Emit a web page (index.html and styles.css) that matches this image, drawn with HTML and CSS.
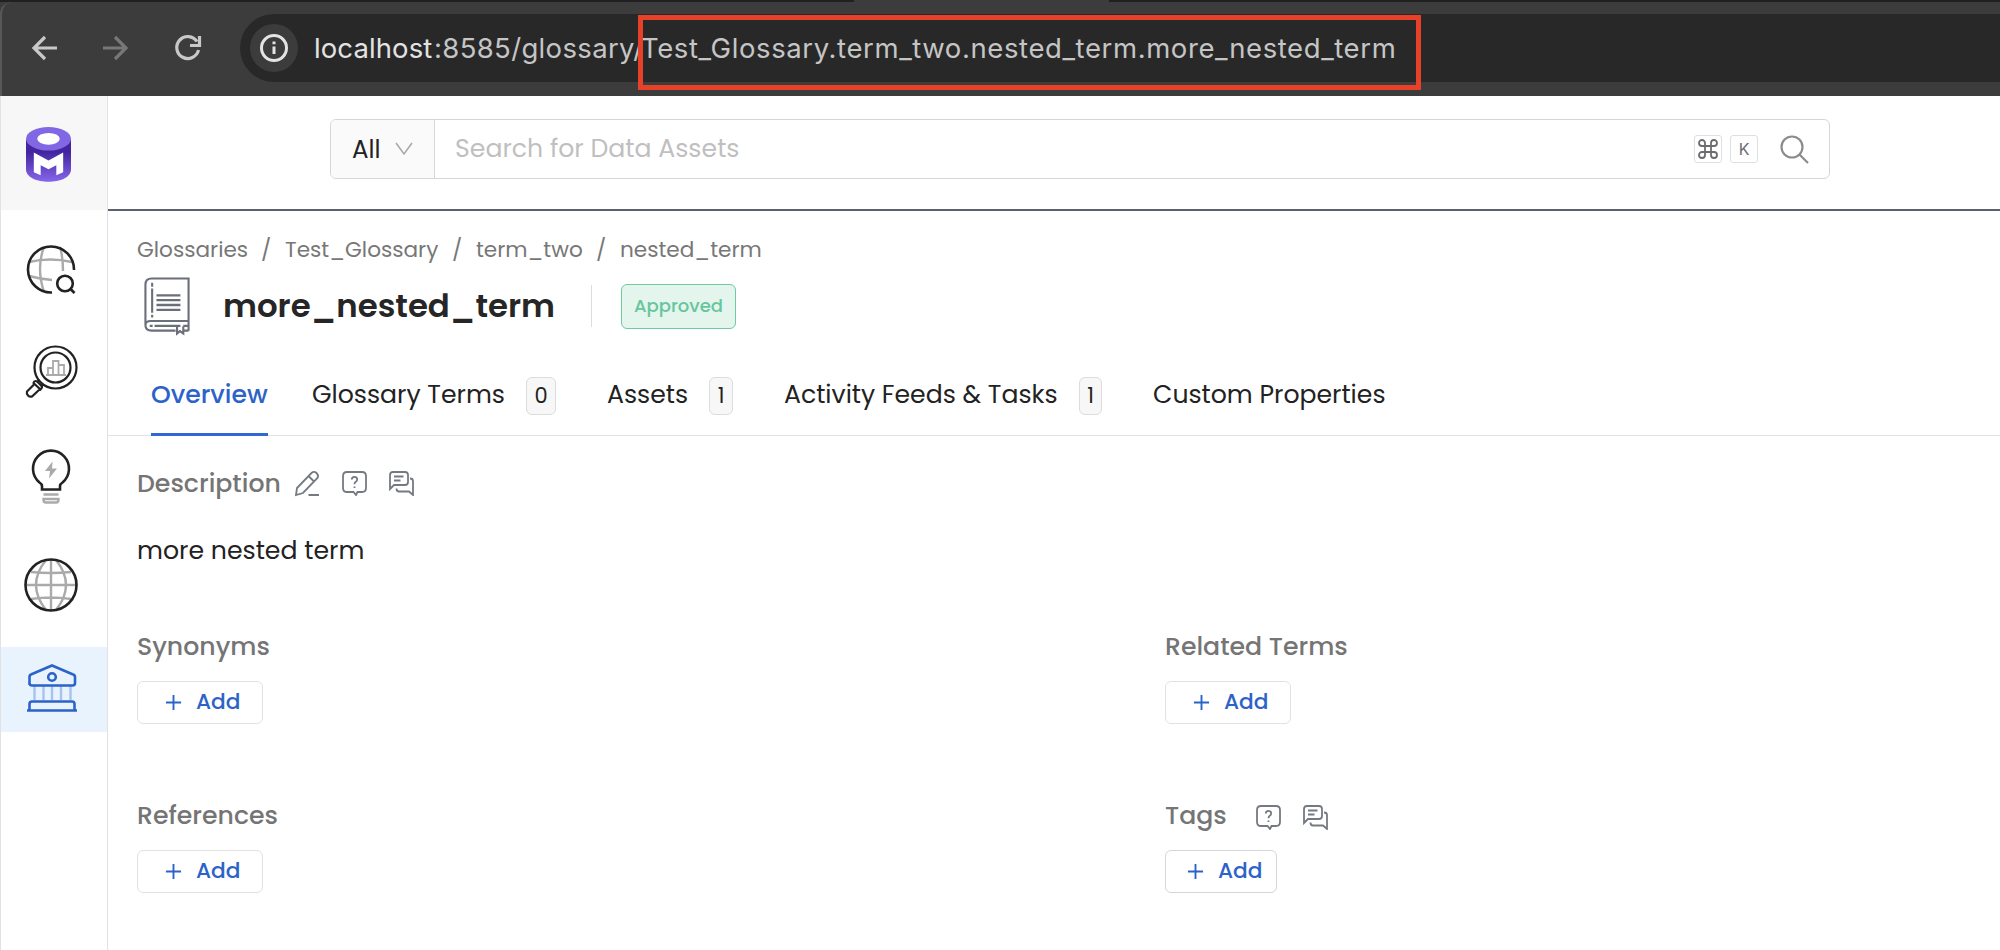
FILE: index.html
```html
<!DOCTYPE html>
<html lang="en">
<head>
<meta charset="utf-8">
<title>more_nested_term</title>
<link rel="stylesheet" href="styles.css">
</head>
<body>
<svg class="defs" width="0" height="0">
  <symbol id="help" viewBox="0 0 25 25"><path d="M5 1H20Q24 1 24 5V17Q24 21 20 21H15.500L14 24L11.500 21H5Q1 21 1 17V5Q1 1 5 1ZM9.800 8.500Q9.800 5.800 12.500 5.800T15.200 8.500Q15.200 10 13.500 11Q12.500 11.700 12.500 13.200M12.500 15.500V17"/></symbol>
  <symbol id="chat" viewBox="0 0 25 25"><path d="M4 1H16Q19 1 19 4V11Q19 14 16 14H5L1 18V4Q1 1 4 1ZM5 5.500H14.500M5 9.500H11.500M21 7.500Q24 7.500 24 10V24L20 20.500H10Q7.500 20.500 7.500 17.500"/></symbol>
  <symbol id="plus" viewBox="0 0 18 18"><path d="M9 1V17M1 9H17"/></symbol>
</svg>
<header class="browser">
  <div class="tabstrip"><i class="tab-left"></i><i class="tab-right"></i></div>
  <div class="toolbar">
    <svg class="tool back" viewBox="0 0 26 26"><path d="M25 13H2M13 2L2 13L13 24"/></svg>
    <svg class="tool forward" viewBox="0 0 26 26"><path d="M1 13H24M13 2L24 13L13 24"/></svg>
    <svg class="tool reload" viewBox="0 0 26 26"><path d="M22 6.500A11 11 0 1 0 23.500 15M24.500 1V10.500H15"/></svg>
    <div class="omnibox">
      <span class="info"><svg viewBox="0 0 30 30"><circle cx="15" cy="15" r="12.500"/><path d="M15 13.500V21M15 8.500V11.200"/></svg></span>
      <span class="url"><b class="host">localhost</b><span class="port">:8585/glossary/</span><span class="path">Test_Glossary.term_two.nested_term.more_nested_term</span></span>
    </div>
  </div>
  <div class="highlight"></div>
</header>
<div class="app">
  <aside class="sidebar">
    <div class="brand">
      <svg width="45" height="55" viewBox="0 0 46 56" preserveAspectRatio="none">
        <defs><linearGradient id="lg" x2="0" y2="1"><stop offset=".3" stop-color="#43269f"/><stop offset="1" stop-color="#8666eb"/></linearGradient></defs>
        <path d="M0 13V43C0 60 46 60 46 43V13Z" fill="url(#lg)"/>
        <ellipse cx="23" cy="12" rx="23" ry="12" fill="#8267e4"/><ellipse cx="23" cy="12" rx="11.500" ry="6" fill="#fff"/>
        <path d="M8 26L23 34L38 26V46L31 49V39L23 43L15 39V49L8 46Z" fill="#fff"/>
      </svg>
    </div>
    <nav class="menu">
      <a class="item explore"><svg width="50" height="50" viewBox="0 0 50 50"><g class="soft"><path d="M18 2Q10 23 18 47M34 2Q37 12 37 26M3 17Q24 12 46 17M3 31Q14 34 26 35"/></g><path d="M26 47.500A23 23 0 1 1 48 25"/><circle cx="39" cy="38.500" r="7.800"/><path d="M44.500 44L48.500 48"/></svg></a>
      <a class="item quality"><svg width="54" height="54" viewBox="0 0 54 54"><circle cx="31.500" cy="22.500" r="21"/><circle cx="31.500" cy="22.500" r="15"/><g class="soft thin"><path d="M22 30H42M24 30V23H29V30M29 30V16H34.500V30M34.500 20H40V30"/></g><path d="M15.500 34.500L13 37.500M19.500 39L17 41.500M11.500 36Q13 36 18 41.500Q18.500 43 16.500 44.500L9.500 38Q10 36 11.500 36ZM10 39.500L3 46.500A4 4 0 0 0 8 51.500L15.500 44.500"/></svg></a>
      <a class="item insight"><svg width="40" height="56" viewBox="0 0 40 56"><path d="M11 40.500V37Q11 35 8.500 33.500A18 18 0 1 1 31.500 33.500Q29 35 29 37V40.500Z"/><g class="soft"><path d="M12.500 45.500H27.500M12.500 50H27.500V51Q27.500 53.500 25 53.500H15Q12.500 53.500 12.500 51Z"/></g><path class="bolt" d="M21.500 12.500L14 22H19L18 29.500L26 19.500H21Z"/></svg></a>
      <a class="item domain"><svg width="54" height="54" viewBox="0 0 54 54"><g class="soft"><path d="M27 1V53M1 27H53M7 14Q27 16 47 14M7 41Q27 38 47 41"/><path d="M22 2Q2 27 22 52M32 2Q52 27 32 52"/></g><circle cx="27" cy="27" r="25.500"/></svg></a>
      <a class="item govern active"><svg width="52" height="50" viewBox="0 0 52 50"><g class="soft"><path d="M8.500 23V37M17.500 23V37M26 23V37M35 23V37M44.500 23V37"/></g><path d="M3.500 22V14Q3.500 12 5.500 11.300L26 2.500L46.500 11.300Q49 12 49 14V20Q49 22.500 46.500 22.500H6Q3.500 22.500 3.500 20ZM1 47.500H51M3.500 47V41Q3.500 38.500 6 38.500H46Q48.500 38.500 48.500 41V47"/><circle cx="26" cy="14" r="3.800"/></svg></a>
    </nav>
  </aside>
  <main class="main">
    <div class="navbar">
      <div class="search">
        <div class="scope"><span class="all">All</span><svg width="18" height="14" viewBox="0 0 18 14"><path d="M1 1L9 12L17 1"/></svg></div>
        <div class="field"><span class="placeholder">Search for Data Assets</span>
          <span class="keys"><kbd><svg width="20" height="20" viewBox="0 0 20 20"><path d="M7 7V4A3 3 0 1 0 4 7H16A3 3 0 1 0 13 4V16A3 3 0 1 0 16 13H4A3 3 0 1 0 7 16Z"/></svg></kbd><kbd>K</kbd></span>
          <svg class="lens" width="29" height="29" viewBox="0 0 29 29"><circle cx="12" cy="12" r="10.500"/><path d="M19.500 19.500L28 28"/></svg>
        </div>
      </div>
    </div>
    <div class="head">
      <div class="crumbs"><span class="c1">Glossaries</span><i>/</i><span class="c2">Test_Glossary</span><i>/</i><span class="c3">term_two</span><i>/</i><span class="c4">nested_term</span></div>
      <div class="title-row">
        <svg class="book" width="46" height="58" viewBox="0 0 48 60" preserveAspectRatio="none"><path d="M46.500 55.500V1.500H8Q1.500 1.500 1.500 8V50Q1.500 55.500 8 55.500H33M40 55.500H46.500M46.500 45.500H7Q1.500 45.500 1.500 50M6 50.500H9M11 50.500H38M41 50.500H46.500M8.500 6V10M8.500 12V37M8.500 39V42M34.500 51V58.500L37.500 56L41 58.500V51"/><path class="lines" d="M13 19H38M13 24H38M13 29H38M13 34H38"/></svg>
        <h1>more_nested_term</h1><span class="divider"></span><span class="status">Approved</span>
      </div>
      <div class="tabs">
        <a class="tab on t1"><span>Overview</span></a>
        <a class="tab t2"><span>Glossary Terms</span><b>0</b></a>
        <a class="tab t3"><span>Assets</span><b>1</b></a>
        <a class="tab t4"><span>Activity Feeds &amp; Tasks</span><b>1</b></a>
        <a class="tab t5"><span>Custom Properties</span></a>
      </div>
    </div>
    <div class="body">
      <section class="description">
        <h2><span>Description</span><svg class="ico" viewBox="0 0 25 25"><path d="M1 24L2 17L16.500 2Q19 -.2 21.500 2T22.500 7L8 22ZM13.500 5L19.500 11M13.500 24H24"/></svg><svg class="ico"><use href="#help"/></svg><svg class="ico"><use href="#chat"/></svg></h2>
        <p>more nested term</p>
      </section>
      <div class="grid">
        <section><h2 class="syn">Synonyms</h2><button><svg class="plus"><use href="#plus"/></svg>Add</button></section>
        <section><h2 class="rel">Related Terms</h2><button><svg class="plus"><use href="#plus"/></svg>Add</button></section>
        <section><h2 class="ref">References</h2><button><svg class="plus"><use href="#plus"/></svg>Add</button></section>
        <section><h2 class="tags"><span>Tags</span><svg class="ico"><use href="#help"/></svg><svg class="ico"><use href="#chat"/></svg></h2><button class="small"><svg class="plus"><use href="#plus"/></svg>Add</button></section>
      </div>
    </div>
  </main>
</div>
</body>
</html>
```

FILE: styles.css
```css
* { box-sizing: border-box; }
body { margin: 0; width: 2000px; height: 950px; overflow: hidden; background: #fff; color: #222; font-family: Poppins, Inter, sans-serif; }
svg { display: block; flex: none; fill: none; stroke: currentColor; overflow: visible; }
.defs { position: absolute; }
h1, h2, p { margin: 0; }
i { font-style: normal; }

.browser { position: relative; height: 96px; background: #3c3c3c; }
.tabstrip { display: flex; justify-content: space-between; height: 2px; }
.tab-left { width: 854px; background: #202020; }
.tab-right { width: 891px; background: #202020; }
.toolbar { display: flex; align-items: center; height: 94px; padding: 0 0 2px 30px; border-left: 2px solid #585858; border-top-left-radius: 12px; }
.tool { width: 26px; height: 26px; stroke: #c8c8c8; stroke-width: 3.2; margin-right: 45px; }
.back { margin-right: 44px; }
.forward { stroke: #777; margin-right: 47px; }
.reload { margin-right: 39px; }
.omnibox { flex: 1; display: flex; align-items: center; height: 68px; padding-left: 10px; background: #282828; border-radius: 34px 0 0 34px; }
.info { display: flex; align-items: center; justify-content: center; width: 48px; height: 48px; border-radius: 50%; background: #3c3c3c; color: #e3e3e3; }
.info svg { width: 30px; height: 30px; stroke-width: 3; }
.url { margin-left: 16px; font: 27.500px Inter, sans-serif; color: #c5c5c5; white-space: nowrap; display: flex; }
.host { width: 120px; font-weight: 400; color: #e3e3e3; letter-spacing: .1px; }
.port { width: 207px; letter-spacing: .35px; }
.path { letter-spacing: .6px; }
.highlight { position: absolute; left: 638px; top: 15px; width: 783px; height: 75px; border: 5px solid #e8412a; }

.app { display: flex; height: 854px; }
.sidebar { width: 108px; border: solid #e2e2e4; border-width: 0 1px; }
.brand { height: 114px; padding: 31px 0 0 25px; background: #f7f7f8; }
.brand svg { stroke: none; }
.item { display: flex; align-items: center; justify-content: center; color: #222; stroke-width: 2.6; }
.item svg { margin-right: 6px; }
.soft { stroke: #aaa; stroke-width: 2.4; }
.thin { stroke-width: 1.8; }
.bolt { fill: #aaa; stroke: none; }
.explore { height: 119px; }
.quality { height: 86px; stroke-width: 2.2; }
.insight { height: 123px; }
.domain { height: 93px; }
.govern { height: 85px; margin-top: 16px; background: #e8f3fe; color: #2c63c8; }
.govern .soft { stroke: #a6c2f0; }
.govern svg { margin: 0 5px 4px 0; }

.main { flex: 1; }
.navbar { height: 115px; padding: 23px 0 0 222px; border-bottom: 2px solid #5b626d; }
.search { display: flex; width: 1500px; height: 60px; border: 1px solid #d6d6d6; border-radius: 6px; overflow: hidden; }
.scope { display: flex; align-items: center; width: 104px; padding-left: 21px; background: #fafafa; border-right: 1px solid #d6d6d6; font-size: 24.500px; color: #222; }
.all { width: 43px; }
.scope svg { stroke: #aaa; stroke-width: 1.6; }
.field { flex: 1; display: flex; align-items: center; padding: 0 20px; }
.placeholder { flex: 1; color: #bfbfbf; font-size: 25.200px; line-height: 36px; }
.keys { display: flex; gap: 8px; margin-right: 22px; }
kbd { display: flex; align-items: center; justify-content: center; width: 28px; height: 28px; border: 1.500px solid #dcdfe4; border-radius: 3px; font: 16px Inter, sans-serif; color: #6b6b70; }
kbd svg { stroke-width: 1.8; }
.lens { stroke: #8c8c8c; stroke-width: 2.2; }

.head { border-bottom: 1px solid #e2e2e2; height: 225px; padding: 24px 0 0 29px; }
.crumbs { display: flex; height: 30px; line-height: 30px; font-size: 21.600px; color: #777; }
.crumbs i { width: 37px; padding-left: 13px; }
.c1 { width: 111px; } .c2 { width: 154px; } .c3 { width: 107px; }
.title-row { display: flex; align-items: center; height: 60px; margin-top: 11px; padding-left: 7px; color: #6b6f7a; }
.book { stroke-width: 2.2; }
.lines { stroke-width: 2.4; }
h1 { width: 368px; margin-left: 33px; font-size: 32.400px; font-weight: 600; line-height: 60px; color: #262626; }
.divider { width: 1px; height: 42px; background: #ddd; }
.status { width: 115px; height: 45px; margin-left: 29px; border: 1px solid #6fc9a4; border-radius: 6px; background: #e3f5ec; color: #66c69d; font-size: 18px; line-height: 42px; text-align: center; font-weight: 500; }
.tabs { display: flex; height: 99px; padding: 0 0 0 14px; }
.tab { display: flex; height: 100px; padding-top: 41px; font-size: 25.150px; line-height: 36px; white-space: nowrap; }
.tab b { height: 38px; border: 1px solid #dcdcdc; border-radius: 6px; background: #f7f7f7; font-size: 21px; font-weight: 400; text-align: center; }
.t1 { width: 117px; margin-right: 44px; color: #2c63c8; font-weight: 500; border-bottom: 3px solid #3367d6; }
.t2 span { width: 214px; } .t2 b { width: 30px; margin-right: 51px; }
.t3 span { width: 102px; } .t3 b { width: 24px; margin-right: 51px; }
.t4 span { width: 295px; } .t4 b { width: 23px; margin-right: 51px; }

.body { padding: 28px 0 0 29px; }
h2 { display: flex; align-items: center; height: 40px; font-size: 25.200px; font-weight: 500; color: #757575; white-space: nowrap; }
.description h2 span { width: 158px; }
.description .ico { margin-bottom: 2px; }
.ico { width: 25px; height: 25px; margin-right: 22px; stroke: #757982; stroke-width: 1.8; }
p { margin-top: 27px; line-height: 40px; font-size: 25.200px; }
.grid { display: grid; grid-template-columns: 1028px 1fr; grid-auto-rows: 169px; margin-top: 56px; }
.tags span { width: 91px; }
.tags .ico { margin-top: 2px; }
button { display: flex; align-items: center; width: 126px; height: 43px; margin-top: 14px; padding: 0 0 2px 27px; border: 1px solid #e2e2e2; border-radius: 6px; background: #fff; color: #2c63c8; font: 500 21.700px Poppins, Inter, sans-serif; }
.plus { width: 17px; height: 17px; margin: 2px 14px 0 0; stroke-width: 2; }
.small { width: 112px; padding-left: 21px; border-color: #d6d6d6; }
```
